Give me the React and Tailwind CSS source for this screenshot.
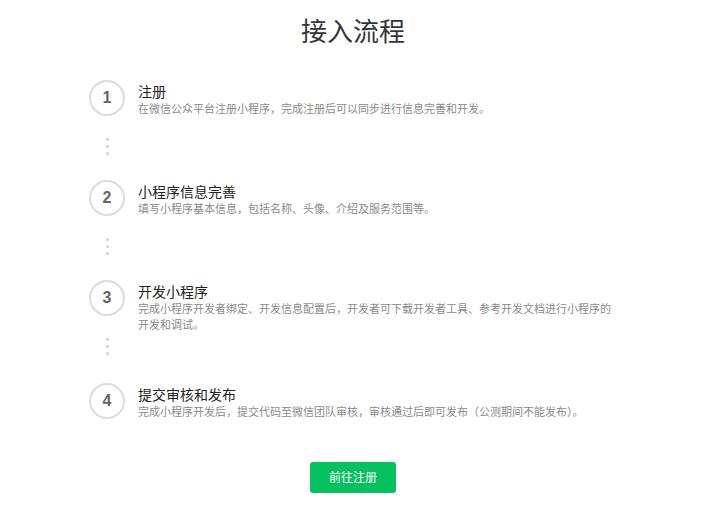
export default function App() {
  const steps = [
    { n: 1, t: "注册", d: ["在微信公众平台注册小程序，完成注册后可以同步进行信息完善和开发。"], h: "h-[64px]" },
    { n: 2, t: "小程序信息完善", d: ["填写小程序基本信息，包括名称、头像、介绍及服务范围等。"], h: "h-[64px]" },
    { n: 3, t: "开发小程序", d: ["完成小程序开发者绑定、开发信息配置后，开发者可下载开发者工具、参考开发文档进行小程序的", "开发和调试。"], h: "h-[67px]" },
    { n: 4, t: "提交审核和发布", d: ["完成小程序开发后，提交代码至微信团队审核，审核通过后即可发布（公测期间不能发布）。"], h: null },
  ];
  return (
    <div className="w-[706px] h-[511px] bg-white" style={{ fontFamily: '"Liberation Sans", "Noto Sans CJK SC", sans-serif' }}>
      <h1 className="pt-[15px] text-center text-[26px] leading-[34px] text-[#353535]">接入流程</h1>
      <div className="mt-[31px] pl-[89px]">
        {steps.map((s) => (
          <div key={s.n} className="flex">
            <div className="w-[36px] flex flex-col items-center">
              <div className="w-[36px] h-[36px] rounded-full border-2 border-[#dcdcdc] flex items-center justify-center text-[16px] font-bold text-[#666]">{s.n}</div>
              {s.h && (
                <div className={`${s.h} flex flex-col items-center pt-[22px] gap-[4px]`}>
                  <div className="w-[3px] h-[3px] rounded-full bg-[#d0d0d0]" />
                  <div className="w-[3px] h-[3px] rounded-full bg-[#d0d0d0]" />
                  <div className="w-[3px] h-[3px] rounded-full bg-[#d0d0d0]" />
                </div>
              )}
            </div>
            <div className="ml-[13px] pt-[3px]">
              <div className="text-[14px] leading-[18px] text-[#222]">{s.t}</div>
              {s.d.map((l, i) => (
                <div key={i} className="text-[11px] leading-[16px] text-[#8a8a8a]">{l}</div>
              ))}
            </div>
          </div>
        ))}
      </div>
      <div className="flex justify-center mt-[42px]">
        <button className="w-[86px] h-[31px] rounded-[3px] bg-[#07c160] text-white text-[12px]">前往注册</button>
      </div>
    </div>
  );
}
